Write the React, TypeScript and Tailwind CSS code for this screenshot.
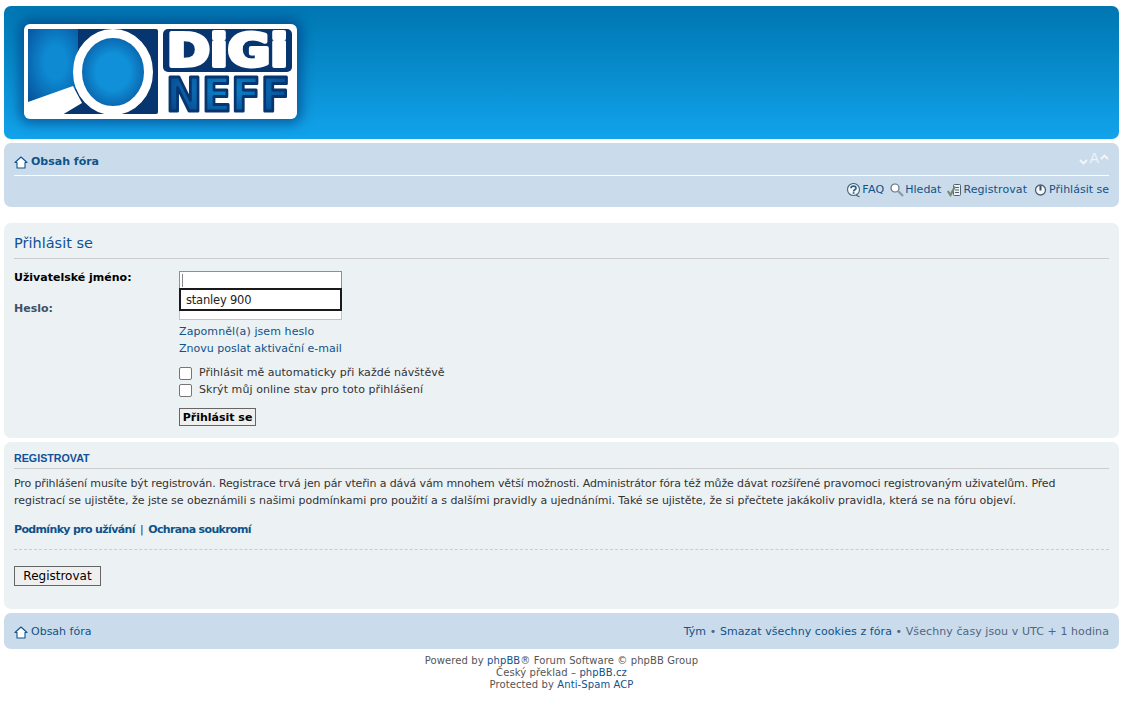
const font = { fontFamily: '"DejaVu Sans", Verdana, sans-serif' };

function Home() {
  return (
    <svg width="14" height="13" viewBox="0 0 14 13" className="shrink-0">
      <path d="M7 1 L13 6.5 L11 6.5 L11 12 L3 12 L3 6.5 L1 6.5 Z" fill="#ffffff" stroke="#105289" strokeWidth="1.1" strokeLinejoin="round" />
    </svg>
  );
}
function Faq() {
  return (
    <svg width="15" height="15" viewBox="0 0 15 15" className="shrink-0">
      <circle cx="7.5" cy="6.5" r="6" fill="#f4f8fb" stroke="#4f6b80" strokeWidth="1.2" />
      <path d="M5 5.2 C5 2.3 10 2.3 10 5.2 C10 7 7.6 6.6 7.6 8.4" fill="none" stroke="#2c5f86" strokeWidth="1.7" />
      <rect x="6.7" y="9.2" width="1.8" height="1.6" fill="#2c5f86" />
      <path d="M10 12 L13.5 14" stroke="#4f6b80" strokeWidth="1.4" />
    </svg>
  );
}
function Search() {
  return (
    <svg width="14" height="15" viewBox="0 0 14 15" className="shrink-0">
      <circle cx="5" cy="5" r="4" fill="#ffffff" stroke="#5f7384" strokeWidth="1.2" />
      <path d="M8 8 L13 13" stroke="#8b9ba8" strokeWidth="2.4" />
    </svg>
  );
}
function Reg() {
  return (
    <svg width="15" height="14" viewBox="0 0 15 14" className="shrink-0">
      <rect x="6.5" y="1.5" width="7" height="11" rx="1" fill="#eef3f7" stroke="#4f6070" strokeWidth="1" />
      <path d="M8 4.5 H12 M8 7 H12 M8 9.5 H12" stroke="#4f6070" strokeWidth="1" />
      <path d="M0.8 8 L3.5 12 L8 3.5" fill="none" stroke="#7a8a72" strokeWidth="2.2" />
    </svg>
  );
}
function Power() {
  return (
    <svg width="13" height="14" viewBox="0 0 13 14" className="shrink-0">
      <circle cx="6.5" cy="7" r="5" fill="#f4f8fb" stroke="#4f6070" strokeWidth="1.3" />
      <path d="M6.5 2.5 V7.5" stroke="#3c4d5e" strokeWidth="2" />
    </svg>
  );
}
function Chevron({ up }: { up?: boolean }) {
  return (
    <svg width="9" height="6" viewBox="0 0 9 6" className={up ? "mb-[6px]" : "mb-[1px]"}>
      <path d={up ? "M1 5 L4.5 1.5 L8 5" : "M1 1 L4.5 4.5 L8 1"} fill="none" stroke="#f2f7fb" strokeWidth="1.8" />
    </svg>
  );
}

function Logo() {
  const letter = { fontFamily: '"DejaVu Sans", sans-serif', fontWeight: 700, fontSize: 44 };
  return (
    <svg width="273" height="95" viewBox="0 0 273 95" className="block overflow-visible blur-[0.5px]">
      <defs>
        <radialGradient id="glass" cx="0.5" cy="0.5" r="0.6">
          <stop offset="0.4" stopColor="#0f90d8" />
          <stop offset="1" stopColor="#074a92" />
        </radialGradient>
        <radialGradient id="blk" cx="0.55" cy="0.45" r="0.75">
          <stop offset="0.3" stopColor="#0d8ad2" />
          <stop offset="1" stopColor="#07509a" />
        </radialGradient>
        <radialGradient id="neff" cx="0.5" cy="0.4" r="0.6">
          <stop offset="0" stopColor="#0d86cc" />
          <stop offset="1" stopColor="#07458c" />
        </radialGradient>
      </defs>
      <rect width="273" height="95" rx="6" fill="#ffffff" />
      <rect x="4" y="5" width="130" height="85" rx="2" fill="#06356f" />
      <path d="M4 5 H54 V64 L4 79 Z" fill="url(#blk)" />
      <path d="M4 78 L49 62 L58 79 L38 91 L1 91 Z" fill="#ffffff" />
      <ellipse cx="89" cy="48" rx="35.5" ry="38.5" fill="url(#glass)" stroke="#ffffff" strokeWidth="9" />
      <rect x="139" y="5" width="129" height="43" rx="5" fill="#06356f" />
      <text x="143" y="42" fill="#ffffff" stroke="#ffffff" strokeWidth="4" strokeLinejoin="round" textLength="121" lengthAdjust="spacingAndGlyphs" style={letter}>DiGi</text>
      <text x="142" y="87" fill="url(#neff)" stroke="#06356f" strokeWidth="3" strokeLinejoin="round" textLength="124" lengthAdjust="spacingAndGlyphs" style={{ ...letter, fontSize: 47 }}>NEFF</text>
    </svg>
  );
}

export default function App() {
  return (
    <div className="bg-white min-h-[701px] w-[1147px] pt-[6px] pl-1 text-[11px] text-[#536482]" style={font}>
      <div className="w-[1115px] flex flex-col">
        <header className="h-[133px] rounded-[7px] bg-gradient-to-b from-[#0076b1] to-[#12a3eb] pl-[20px] pt-[18px]">
          <div className="w-[273px] rounded-[7px] shadow-[0_0_12px_5px_rgba(0,50,115,0.55)]">
            <Logo />
          </div>
        </header>

        <nav className="mt-1 h-[64px] rounded-[7px] bg-[#cadceb] px-[10px] pt-[5px]">
          <div className="h-[28px] border-b border-white flex items-center justify-between">
            <div className="flex items-center gap-[3px] font-bold text-[#105289] pt-[2px]">
              <Home />
              <span className="text-[11px]">Obsah fóra</span>
            </div>
            <div className="text-[#eef4f9] text-[14px] leading-[16px] -mt-[8px] flex items-end gap-[1px]">
              <Chevron />A<Chevron up />
            </div>
          </div>
          <div className="flex justify-end items-center gap-[6px] h-[28px] text-[#105289] text-[11px]">
            <span className="flex items-center gap-[1px]"><Faq /><span className="tracking-[0.2px]">FAQ</span></span>
            <span className="flex items-center gap-[1px]"><Search />Hledat</span>
            <span className="flex items-center gap-[1px]"><Reg /><span className="tracking-[0.1px]">Registrovat</span></span>
            <span className="flex items-center gap-[2px] ml-[1px]"><Power />Přihlásit se</span>
          </div>
        </nav>

        <section className="mt-4 h-[215px] rounded-[7px] bg-[#ecf1f3] px-[10px] pt-[10px]">
          <h2 className="h-[26px] border-b border-[#cccccc] text-[14.5px] leading-[20px] text-[#115098]">Přihlásit se</h2>
          <div className="flex mt-[12px]">
            <div className="w-[165px] font-bold text-[11px]">
              <div className="h-[18px] leading-[14px] text-black">Uživatelské jméno:</div>
              <div className="mt-[13px] leading-[14px] text-[#425067]">Heslo:</div>
            </div>
            <div className="flex-1">
              <div className="relative w-[163px]">
                <div className="h-[18px] border border-[#4aa8bf] bg-white flex items-center pl-[2px]">
                  <div className="w-px h-[13px] bg-[#888888]" />
                </div>
                <div className="h-[31px] border border-[#c7c3bf] border-t-0 bg-white" />
                <div className="absolute left-0 top-[17px] w-[163px] h-[23px] border-2 border-[#1a1a1a] bg-white pl-[5px] text-[11.5px] tracking-[-0.2px] leading-[20px] text-[#222222]">stanley 900</div>
              </div>
              <div className="mt-[3px] leading-[17px] text-[#105289]">
                <div className="tracking-[0.09px]">Zapomněl(a) jsem heslo</div>
                <div>Znovu poslat aktivační e-mail</div>
              </div>
              <div className="mt-[8px] text-[#333333]">
                <label className="flex items-center gap-[7px] h-[17px]">
                  <span className="w-[13px] h-[13px] border border-[#767676] rounded-[2px] bg-white" />
                  <span className="tracking-[0.03px]">Přihlásit mě automaticky při každé návštěvě</span>
                </label>
                <label className="flex items-center gap-[7px] h-[17px]">
                  <span className="w-[13px] h-[13px] border border-[#767676] rounded-[2px] bg-white" />
                  <span className="tracking-[0.07px]">Skrýt můj online stav pro toto přihlášení</span>
                </label>
              </div>
              <button className="mt-[9px] block w-[77px] h-[18px] border border-[#666666] bg-[#efefef] text-[11px] leading-[15px] font-bold text-black">Přihlásit se</button>
            </div>
          </div>
        </section>

        <section className="mt-1 h-[167px] rounded-[7px] bg-[#ecf1f3] px-[10px] pt-[10px]">
          <h3 className="h-[17px] border-b border-[#cccccc] font-bold leading-[13px] text-[#115098] text-[10.7px]" style={{ fontFamily: '"Liberation Sans", Arial, sans-serif' }}>REGISTROVAT</h3>
          <p className="mt-[6px] leading-[17px] text-[#333333]">
            <span className="block whitespace-nowrap tracking-[-0.13px]">Pro přihlášení musíte být registrován. Registrace trvá jen pár vteřin a dává vám mnohem větší možnosti. Administrátor fóra též může dávat rozšířené pravomoci registrovaným uživatelům. Před</span>
            <span className="block whitespace-nowrap tracking-[-0.04px]">registrací se ujistěte, že jste se obeznámili s našimi podmínkami pro použití a s dalšími pravidly a ujednáními. Také se ujistěte, že si přečtete jakákoliv pravidla, která se na fóru objeví.</span>
          </p>
          <p className="mt-[12px] leading-[17px] font-bold text-[#105289] tracking-[-0.65px] whitespace-nowrap">
            Podmínky pro užívání <span className="font-normal text-[#333333] mx-[2px]">|</span> Ochrana soukromí
          </p>
          <div className="mt-[11px] border-t border-dashed border-[#cccccc]" />
          <button className="mt-[16px] block w-[87px] h-[20px] border border-[#666666] bg-[#efefef] pt-px text-[12px] leading-[17px] text-black">Registrovat</button>
        </section>

        <footer className="mt-1 h-[36px] rounded-[7px] bg-[#cadceb] px-[10px] flex items-center justify-between">
          <div className="flex items-center gap-[3px] text-[#105289] pt-[2px]">
            <Home />
            <span>Obsah fóra</span>
          </div>
          <div className="pt-[2px] tracking-[0.08px]">
            <span className="text-[#105289]">Tým</span> • <span className="text-[#105289]">Smazat všechny cookies z fóra</span> • Všechny časy jsou v UTC + 1 hodina
          </div>
        </footer>

        <div className="mt-[6px] text-center text-[10px] leading-[12px] text-[#555555] tracking-[0.1px]">
          <div>Powered by <span className="text-[#105289]">phpBB</span>® Forum Software © phpBB Group</div>
          <div>Český překlad – <span className="text-[#105289]">phpBB.cz</span></div>
          <div>Protected by <span className="text-[#105289]">Anti-Spam ACP</span></div>
        </div>
      </div>
    </div>
  );
}
